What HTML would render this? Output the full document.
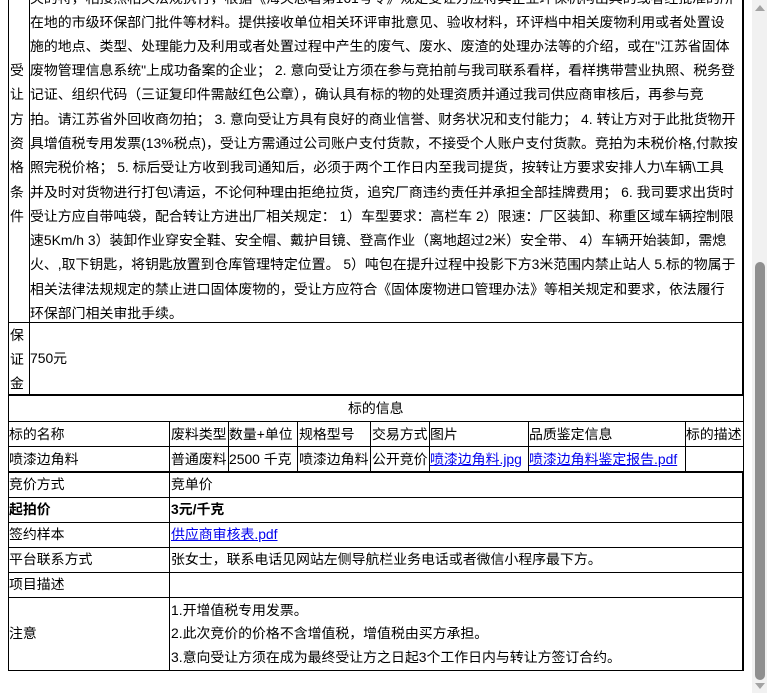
<!DOCTYPE html>
<html><head><meta charset="utf-8">
<style>
*{margin:0;padding:0;box-sizing:border-box}
body{width:767px;height:693px;overflow:hidden;background:#fff;font-family:"Liberation Sans","Noto Sans CJK SC",sans-serif;font-size:13.9px;color:#000;position:relative}
.a{position:absolute}
.h{position:absolute;height:1px;background:#000}
.v{position:absolute;width:1px;background:#000}
.t{position:absolute;white-space:nowrap;line-height:16px}
a{color:#00e;text-decoration:underline}
</style></head><body>
<!-- table 1 borders -->
<div class="v" style="left:8px;top:0;height:396px"></div>
<div class="v" style="left:29px;top:0;height:396px"></div>
<div class="v" style="left:742px;top:0;height:396px;width:2px"></div>
<div class="h" style="left:8px;top:322px;width:736px"></div>
<div class="h" style="left:8px;top:394px;width:736px;height:2px"></div>

<div class="t" style="left:30px;top:-10px">关的特，相接照相关法规执行，根据《海关总署第161号令》规定受让方应将其企业环保机构出具的或者经批准的所</div>
<div class="t" style="left:30px;top:14px">在地的市级环保部门批件等材料。提供接收单位相关环评审批意见、验收材料，环评档中相关废物利用或者处置设</div>
<div class="t" style="left:30px;top:38px">施的地点、类型、处理能力及利用或者处置过程中产生的废气、废水、废渣的处理办法等的介绍，或在"江苏省固体</div>
<div class="t" style="left:30px;top:62px">废物管理信息系统"上成功备案的企业； 2. 意向受让方须在参与竞拍前与我司联系看样，看样携带营业执照、税务登</div>
<div class="t" style="left:30px;top:86px">记证、组织代码（三证复印件需敲红色公章），确认具有标的物的处理资质并通过我司供应商审核后，再参与竞</div>
<div class="t" style="left:30px;top:111px">拍。请江苏省外回收商勿拍； 3. 意向受让方具有良好的商业信誉、财务状况和支付能力； 4. 转让方对于此批货物开</div>
<div class="t" style="left:30px;top:135px">具增值税专用发票(13%税点)，受让方需通过公司账户支付货款，不接受个人账户支付货款。竞拍为未税价格,付款按</div>
<div class="t" style="left:30px;top:159px">照完税价格； 5. 标后受让方收到我司通知后，必须于两个工作日内至我司提货，按转让方要求安排人力\车辆\工具</div>
<div class="t" style="left:30px;top:184px">并及时对货物进行打包\清运，不论何种理由拒绝拉货，追究厂商违约责任并承担全部挂牌费用； 6. 我司要求出货时</div>
<div class="t" style="left:30px;top:208px">受让方应自带吨袋，配合转让方进出厂相关规定： 1）车型要求：高栏车 2）限速：厂区装卸、称重区域车辆控制限</div>
<div class="t" style="left:30px;top:232px">速5Km/h 3）装卸作业穿安全鞋、安全帽、戴护目镜、登高作业（离地超过2米）安全带、 4）车辆开始装卸，需熄</div>
<div class="t" style="left:30px;top:256px">火、,取下钥匙，将钥匙放置到仓库管理特定位置。 5）吨包在提升过程中投影下方3米范围内禁止站人 5.标的物属于</div>
<div class="t" style="left:30px;top:281px">相关法律法规规定的禁止进口固体废物的，受让方应符合《固体废物进口管理办法》等相关规定和要求，依法履行</div>
<div class="t" style="left:30px;top:305px">环保部门相关审批手续。</div>

<div class="t" style="left:10px;top:62px">受</div>
<div class="t" style="left:10px;top:86px">让</div>
<div class="t" style="left:10px;top:111px">方</div>
<div class="t" style="left:10px;top:135px">资</div>
<div class="t" style="left:10px;top:159px">格</div>
<div class="t" style="left:10px;top:184px">条</div>
<div class="t" style="left:10px;top:208px">件</div>

<div class="t" style="left:10px;top:327px">保</div>
<div class="t" style="left:10px;top:351px">证</div>
<div class="t" style="left:10px;top:375px">金</div>
<div class="t" style="left:30px;top:350px">750元</div>

<!-- table 2 -->
<div class="v" style="left:8px;top:396px;height:75px"></div>
<div class="v" style="left:743px;top:396px;height:75px"></div>
<div class="h" style="left:8px;top:421px;width:736px"></div>
<div class="h" style="left:8px;top:446px;width:736px"></div>
<div class="v" style="left:169px;top:421px;height:50px"></div>
<div class="v" style="left:228px;top:421px;height:50px"></div>
<div class="v" style="left:297px;top:421px;height:50px"></div>
<div class="v" style="left:370px;top:421px;height:50px"></div>
<div class="v" style="left:429px;top:421px;height:50px"></div>
<div class="v" style="left:528px;top:421px;height:50px"></div>
<div class="v" style="left:685px;top:421px;height:50px"></div>
<div class="t" style="left:348px;top:400px">标的信息</div>
<div class="t" style="left:9px;top:426px">标的名称</div>
<div class="t" style="left:171px;top:426px">废料类型</div>
<div class="t" style="left:229px;top:426px">数量+单位</div>
<div class="t" style="left:299px;top:426px">规格型号</div>
<div class="t" style="left:372px;top:426px">交易方式</div>
<div class="t" style="left:430px;top:426px">图片</div>
<div class="t" style="left:529px;top:426px">品质鉴定信息</div>
<div class="t" style="left:686px;top:426px">标的描述</div>
<div class="t" style="left:9px;top:451px">喷漆边角料</div>
<div class="t" style="left:171px;top:451px">普通废料</div>
<div class="t" style="left:229px;top:451px">2500 千克</div>
<div class="t" style="left:299px;top:451px">喷漆边角料</div>
<div class="t" style="left:372px;top:451px">公开竞价</div>
<div class="t" style="left:430px;top:451px"><a>喷漆边角料.jpg</a></div>
<div class="t" style="left:529px;top:451px"><a>喷漆边角料鉴定报告.pdf</a></div>

<!-- table 3 -->
<div class="h" style="left:8px;top:471px;width:736px;height:2px"></div>
<div class="v" style="left:8px;top:471px;height:200px"></div>
<div class="v" style="left:742px;top:471px;height:200px;width:2px"></div>
<div class="v" style="left:169px;top:471px;height:200px"></div>
<div class="h" style="left:8px;top:497px;width:736px"></div>
<div class="h" style="left:8px;top:522px;width:736px"></div>
<div class="h" style="left:8px;top:547px;width:736px"></div>
<div class="h" style="left:8px;top:572px;width:736px"></div>
<div class="h" style="left:8px;top:597px;width:736px"></div>
<div class="h" style="left:8px;top:670px;width:736px"></div>
<div class="t" style="left:9px;top:476px">竞价方式</div>
<div class="t" style="left:171px;top:476px">竞单价</div>
<div class="t" style="left:9px;top:501px;font-weight:bold">起拍价</div>
<div class="t" style="left:171px;top:501px;font-weight:bold">3元/千克</div>
<div class="t" style="left:9px;top:526px">签约样本</div>
<div class="t" style="left:171px;top:526px"><a>供应商审核表.pdf</a></div>
<div class="t" style="left:9px;top:551px">平台联系方式</div>
<div class="t" style="left:171px;top:551px">张女士，联系电话见网站左侧导航栏业务电话或者微信小程序最下方。</div>
<div class="t" style="left:9px;top:576px">项目描述</div>
<div class="t" style="left:9px;top:625px">注意</div>
<div class="t" style="left:171px;top:602px">1.开增值税专用发票。</div>
<div class="t" style="left:171px;top:625px">2.此次竞价的价格不含增值税，增值税由买方承担。</div>
<div class="t" style="left:171px;top:649px">3.意向受让方须在成为最终受让方之日起3个工作日内与转让方签订合约。</div>

<!-- scrollbar -->
<div class="a" style="left:752px;top:0;width:15px;height:693px;background:#f1f1f1"></div>
<div class="a" style="left:755px;top:262px;width:10px;height:418px;background:#8f8f8f;border-radius:5px"></div>
<div class="a" style="left:755px;top:5px;width:0;height:0;border-left:5px solid transparent;border-right:5px solid transparent;border-bottom:6px solid #a3a3a3"></div>
<div class="a" style="left:755px;top:683px;width:0;height:0;border-left:5px solid transparent;border-right:5px solid transparent;border-top:6px solid #a3a3a3"></div>
</body></html>
